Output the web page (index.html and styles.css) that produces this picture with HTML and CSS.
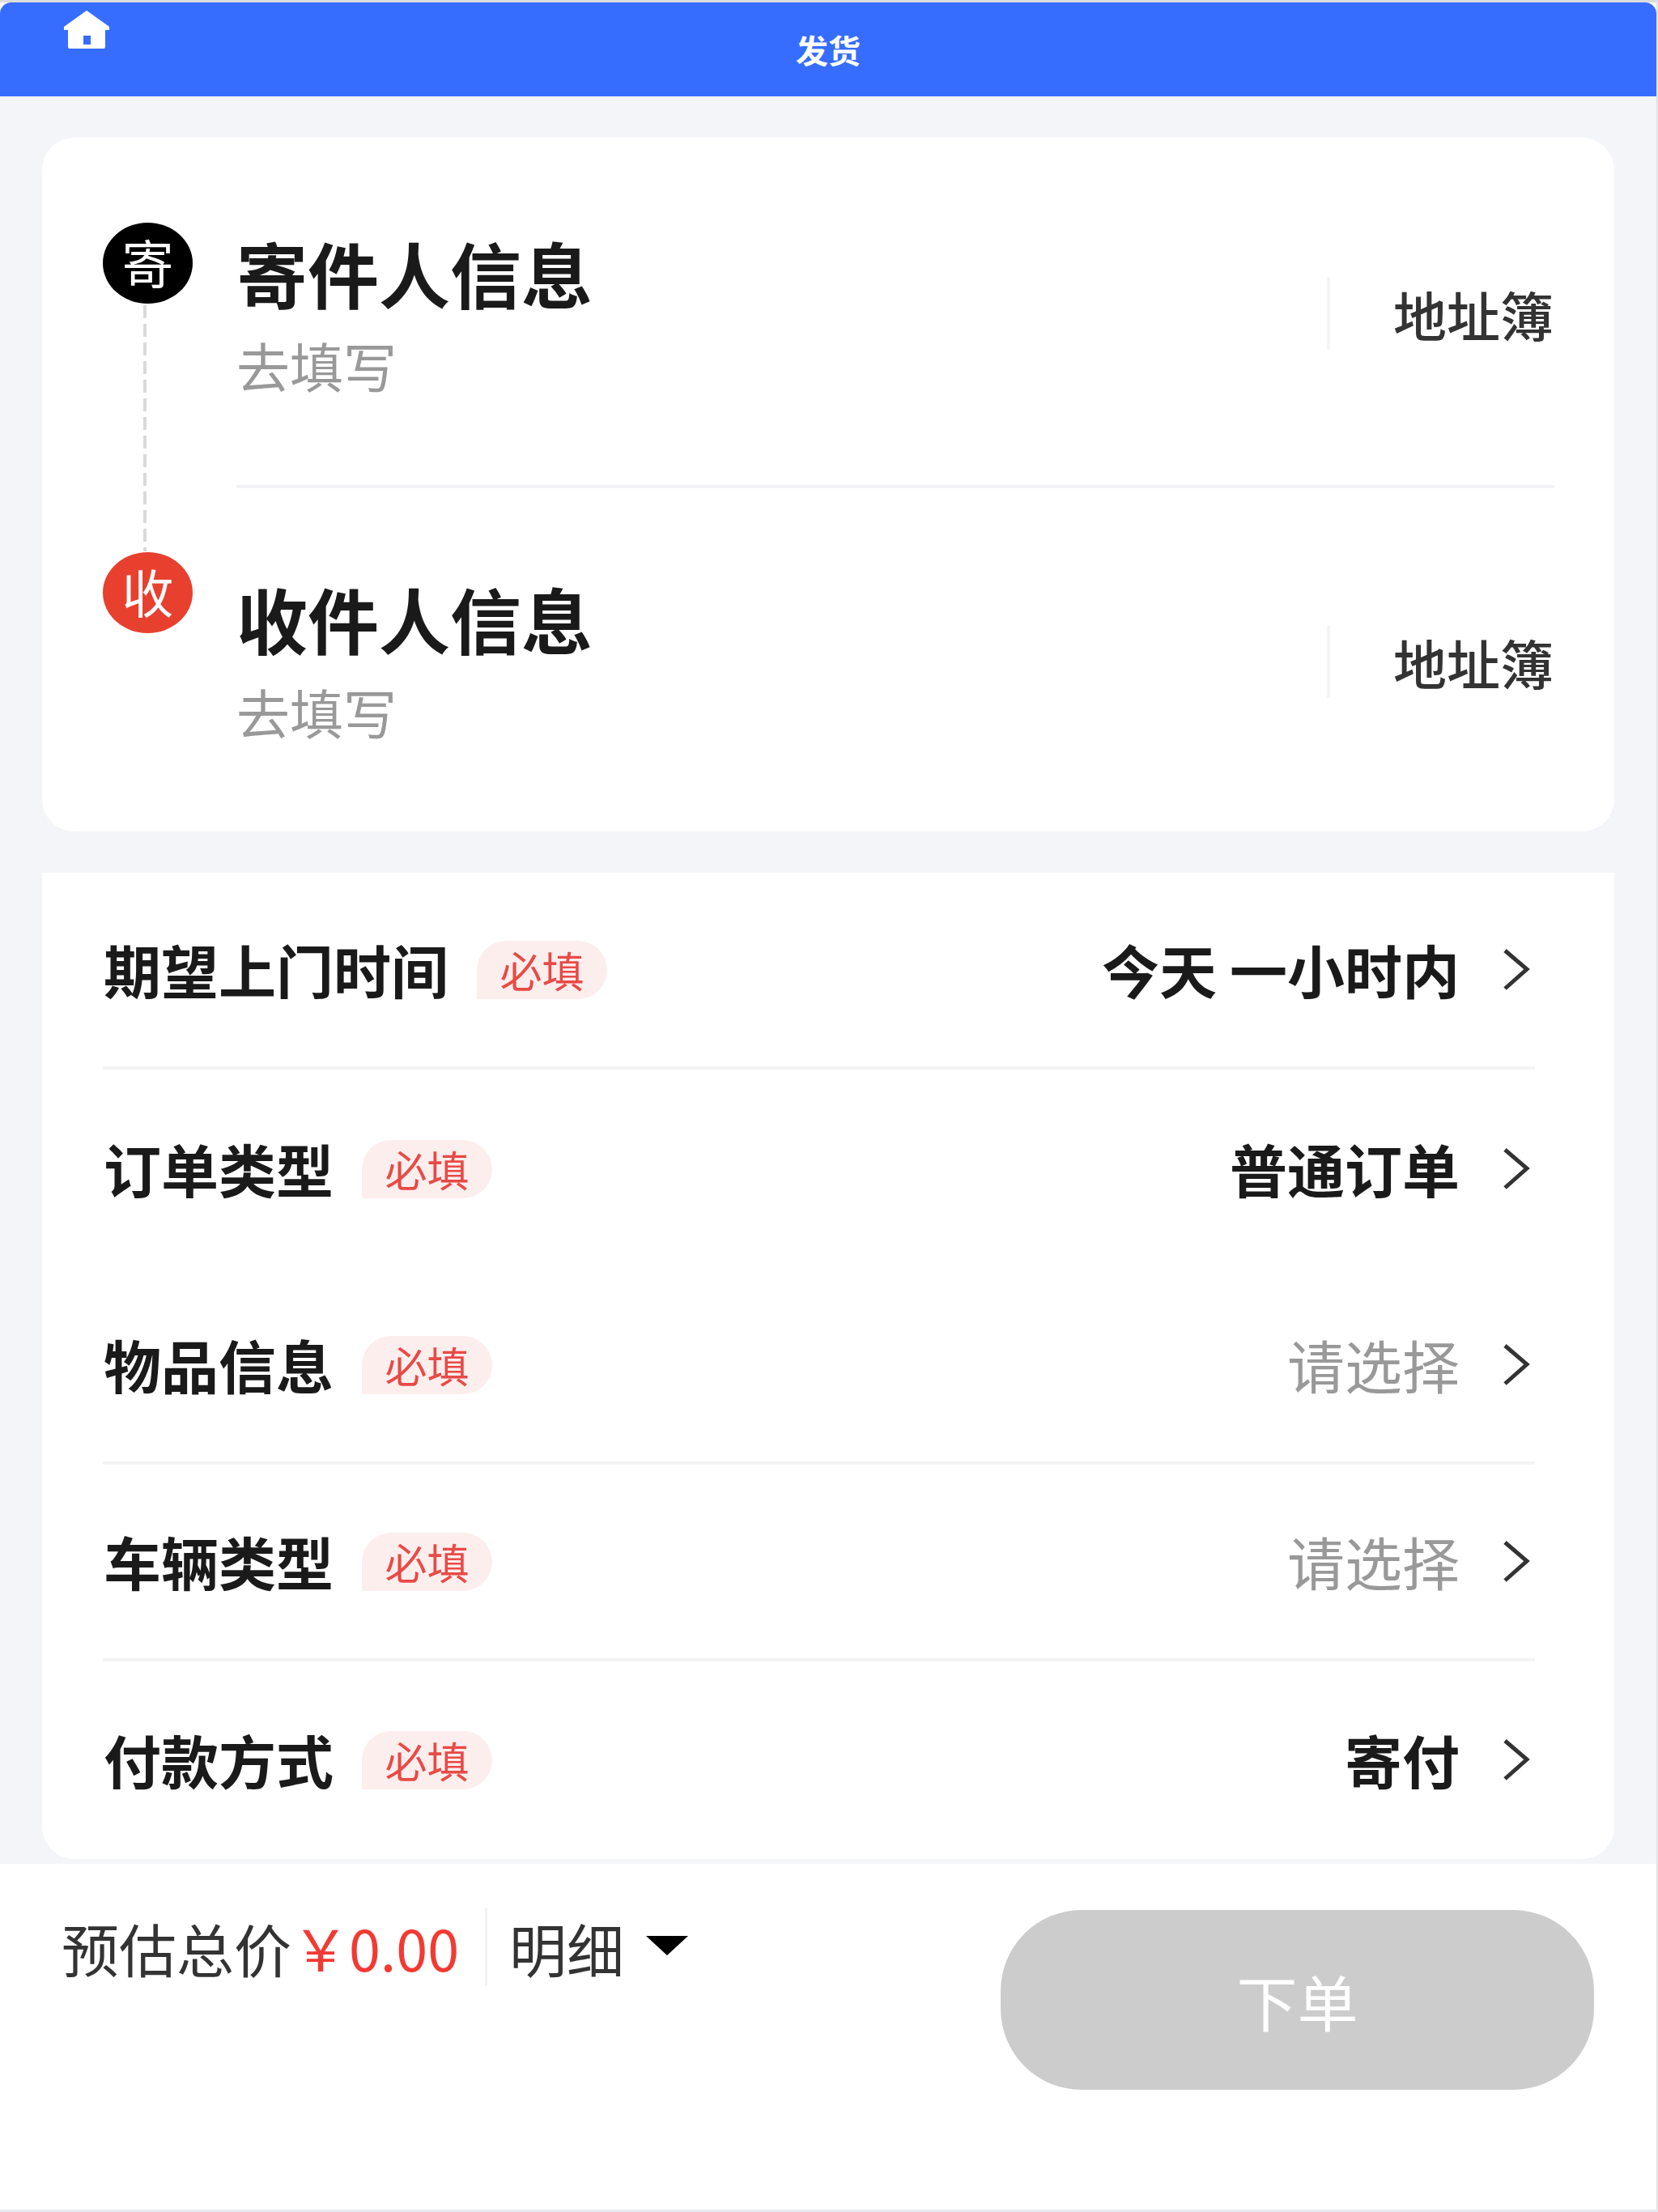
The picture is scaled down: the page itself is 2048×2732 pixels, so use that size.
FILE: index.html
```html
<!DOCTYPE html>
<html lang="zh-CN">
<head>
<meta charset="utf-8">
<title>发货</title>
<link rel="stylesheet" href="styles.css">
</head>
<body>
<div class="app">
  <header class="topbar">
    <svg class="home" viewBox="0 0 58 48" aria-hidden="true"><path fill="#fff" fill-rule="evenodd" d="M29 0 57 20 57 24 52 24V45Q52 47 50 47H8Q6 47 6 45V24H1V20ZM25 31V42H34V31Z"/></svg>
    <h1 class="topbar-title">发货</h1>
  </header>
  <main class="content">
    <section class="parties">
      <div class="party">
        <span class="badge badge-send">寄<i class="route"></i></span>
        <div class="party-text">
          <div class="party-title">寄件人信息</div>
          <div class="party-sub">去填写</div>
        </div>
        <div class="addr">地址簿</div>
      </div>
      <div class="party party-recv">
        <span class="badge badge-recv">收</span>
        <div class="party-text">
          <div class="party-title">收件人信息</div>
          <div class="party-sub">去填写</div>
        </div>
        <div class="addr">地址簿</div>
      </div>
    </section>
    <section class="form">
      <div class="row line">
        <span class="row-label">期望上门时间</span><span class="tag">必填</span>
        <span class="row-value">今天 一小时内</span>
        <svg class="chev" viewBox="0 0 36 54"><path d="M4 3 31 26 4 50" fill="none" stroke="#333" stroke-width="5"/></svg>
      </div>
      <div class="row row-tall">
        <span class="row-label">订单类型</span><span class="tag">必填</span>
        <span class="row-value">普通订单</span>
        <svg class="chev" viewBox="0 0 36 54"><path d="M4 3 31 26 4 50" fill="none" stroke="#333" stroke-width="5"/></svg>
      </div>
      <div class="row line">
        <span class="row-label">物品信息</span><span class="tag">必填</span>
        <span class="row-value muted">请选择</span>
        <svg class="chev" viewBox="0 0 36 54"><path d="M4 3 31 26 4 50" fill="none" stroke="#333" stroke-width="5"/></svg>
      </div>
      <div class="row line">
        <span class="row-label">车辆类型</span><span class="tag">必填</span>
        <span class="row-value muted">请选择</span>
        <svg class="chev" viewBox="0 0 36 54"><path d="M4 3 31 26 4 50" fill="none" stroke="#333" stroke-width="5"/></svg>
      </div>
      <div class="row">
        <span class="row-label">付款方式</span><span class="tag">必填</span>
        <span class="row-value">寄付</span>
        <svg class="chev" viewBox="0 0 36 54"><path d="M4 3 31 26 4 50" fill="none" stroke="#333" stroke-width="5"/></svg>
      </div>
    </section>
  </main>
  <footer class="bottom">
    <div class="price-box">
      <span class="price-label">预估总价</span>
      <span class="price">￥0.00</span>
      <span class="detail">明细<i class="caret"></i></span>
    </div>
    <button class="order" type="button">下单</button>
  </footer>
</div>
</body>
</html>
```
FILE: styles.css
```css
* { box-sizing: border-box; }
html, body { margin: 0; padding: 0; }
body {
  width: 2048px;
  height: 2732px;
  background: #fff;
  font-family: "Noto Sans CJK SC", "Noto Sans", sans-serif;
}
.app {
  height: 2732px;
  display: flex;
  flex-direction: column;
  border-top: 3px solid #dcdcdc;
  border-right: 2px solid #e2e2e8;
  border-bottom: 3px solid #e6ebf3;
  background: #fff;
}
.topbar {
  height: 116px;
  flex: none;
  position: relative;
  background: #366dff;
  border-radius: 14px 14px 0 0;
  display: flex;
  justify-content: center;
}
.home {
  position: absolute;
  left: 78px;
  top: 10px;
  width: 58px;
  height: 48px;
}
.topbar-title {
  margin: 36px 0 0;
  font-size: 40px;
  line-height: 44px;
  font-weight: 700;
  color: #fff;
}
.content {
  flex: none;
  height: 2183px;
  padding: 51px 52px 0;
  background: #f4f5f9;
}
.parties {
  height: 857px;
  background: #fff;
  border-radius: 40px;
}
.party {
  height: 433px;
  padding: 105px 74px 0 75px;
  display: flex;
  align-items: flex-start;
  position: relative;
}
.party::after {
  content: "";
  position: absolute;
  left: 240px;
  right: 74px;
  bottom: 0;
  height: 4px;
  background: #f3f3f5;
}
.party-recv {
  height: 424px;
  padding-top: 99px;
}
.party-recv::after { display: none; }
.party-recv .party-sub { line-height: 108px; }
.party-recv .addr { margin-top: 70px; }
.badge {
  flex: none;
  width: 111px;
  height: 100px;
  border-radius: 50%;
  color: #fff;
  font-size: 64px;
  line-height: 94px;
  text-align: center;
  position: relative;
}
.badge-send { background: #000; }
.badge-recv { background: #e8402f; margin-top: -20px; }
.route {
  position: absolute;
  left: 50px;
  top: 102px;
  width: 4px;
  height: 304px;
  background: repeating-linear-gradient(to bottom, #d9d9d9 0, #d9d9d9 16px, transparent 16px, transparent 23px);
}
.party-text {
  flex: 1;
  margin-left: 54px;
}
.party-title {
  font-size: 88px;
  line-height: 122px;
  font-weight: 700;
  color: #1a1a1a;
}
.party-sub {
  font-size: 66px;
  line-height: 106px;
  color: #999;
}
.addr {
  flex: none;
  width: 281px;
  height: 90px;
  margin-top: 67px;
  padding-left: 78px;
  border-left: 4px solid #f5f5f7;
  font-size: 66px;
  line-height: 90px;
  font-weight: 500;
  color: #333;
  white-space: nowrap;
}
.form {
  height: 1218px;
  margin-top: 51px;
  padding: 0 98px 0 75px;
  background: #fff;
  border-radius: 0 0 40px 40px;
}
.row {
  height: 243px;
  display: flex;
  align-items: center;
  position: relative;
}
.row-tall { height: 245px; }
.line { border-bottom: 4px solid #f4f4f6; }
.row-label {
  padding: 0 0 4px 1px;
  font-size: 71px;
  font-weight: 700;
  color: #1a1a1a;
  white-space: nowrap;
}
.tag {
  width: 161px;
  height: 72px;
  margin-left: 35px;
  border-radius: 36px 36px 36px 0;
  background: #fdeeee;
  color: #e84a45;
  font-size: 52px;
  line-height: 72px;
  text-align: center;
}
.row-value {
  margin-left: auto;
  padding-bottom: 4px;
  font-size: 71px;
  font-weight: 700;
  color: #1a1a1a;
  white-space: pre;
}
.row-value.muted {
  font-weight: 400;
  color: #999;
}
.chev {
  width: 36px;
  height: 54px;
  margin: 0 5px 0 52px;
  flex: none;
}
.bottom {
  flex: 1;
  display: flex;
  justify-content: space-between;
  align-items: flex-start;
  padding: 55px 77px 0 76px;
  background: #fff;
}
.price-box {
  display: flex;
  align-items: flex-start;
  font-size: 71px;
  line-height: 96px;
  color: #333;
}
.price {
  color: #f23a33;
  margin-left: 1px;
  width: 238px;
  font-size: 70px;
}
.detail {
  border-left: 3px solid #f3f3f5;
  padding-left: 27px;
  display: flex;
  align-items: flex-start;
}
.caret {
  width: 0;
  height: 0;
  margin: 34px 0 0 27px;
  border-left: 26px solid transparent;
  border-right: 26px solid transparent;
  border-top: 24px solid #000;
}
.order {
  width: 733px;
  height: 222px;
  margin-top: 2px;
  border: 0;
  padding: 0;
  border-radius: 100px;
  background: #ccc;
  color: #fff;
  font-family: inherit;
  font-size: 75px;
}
```
